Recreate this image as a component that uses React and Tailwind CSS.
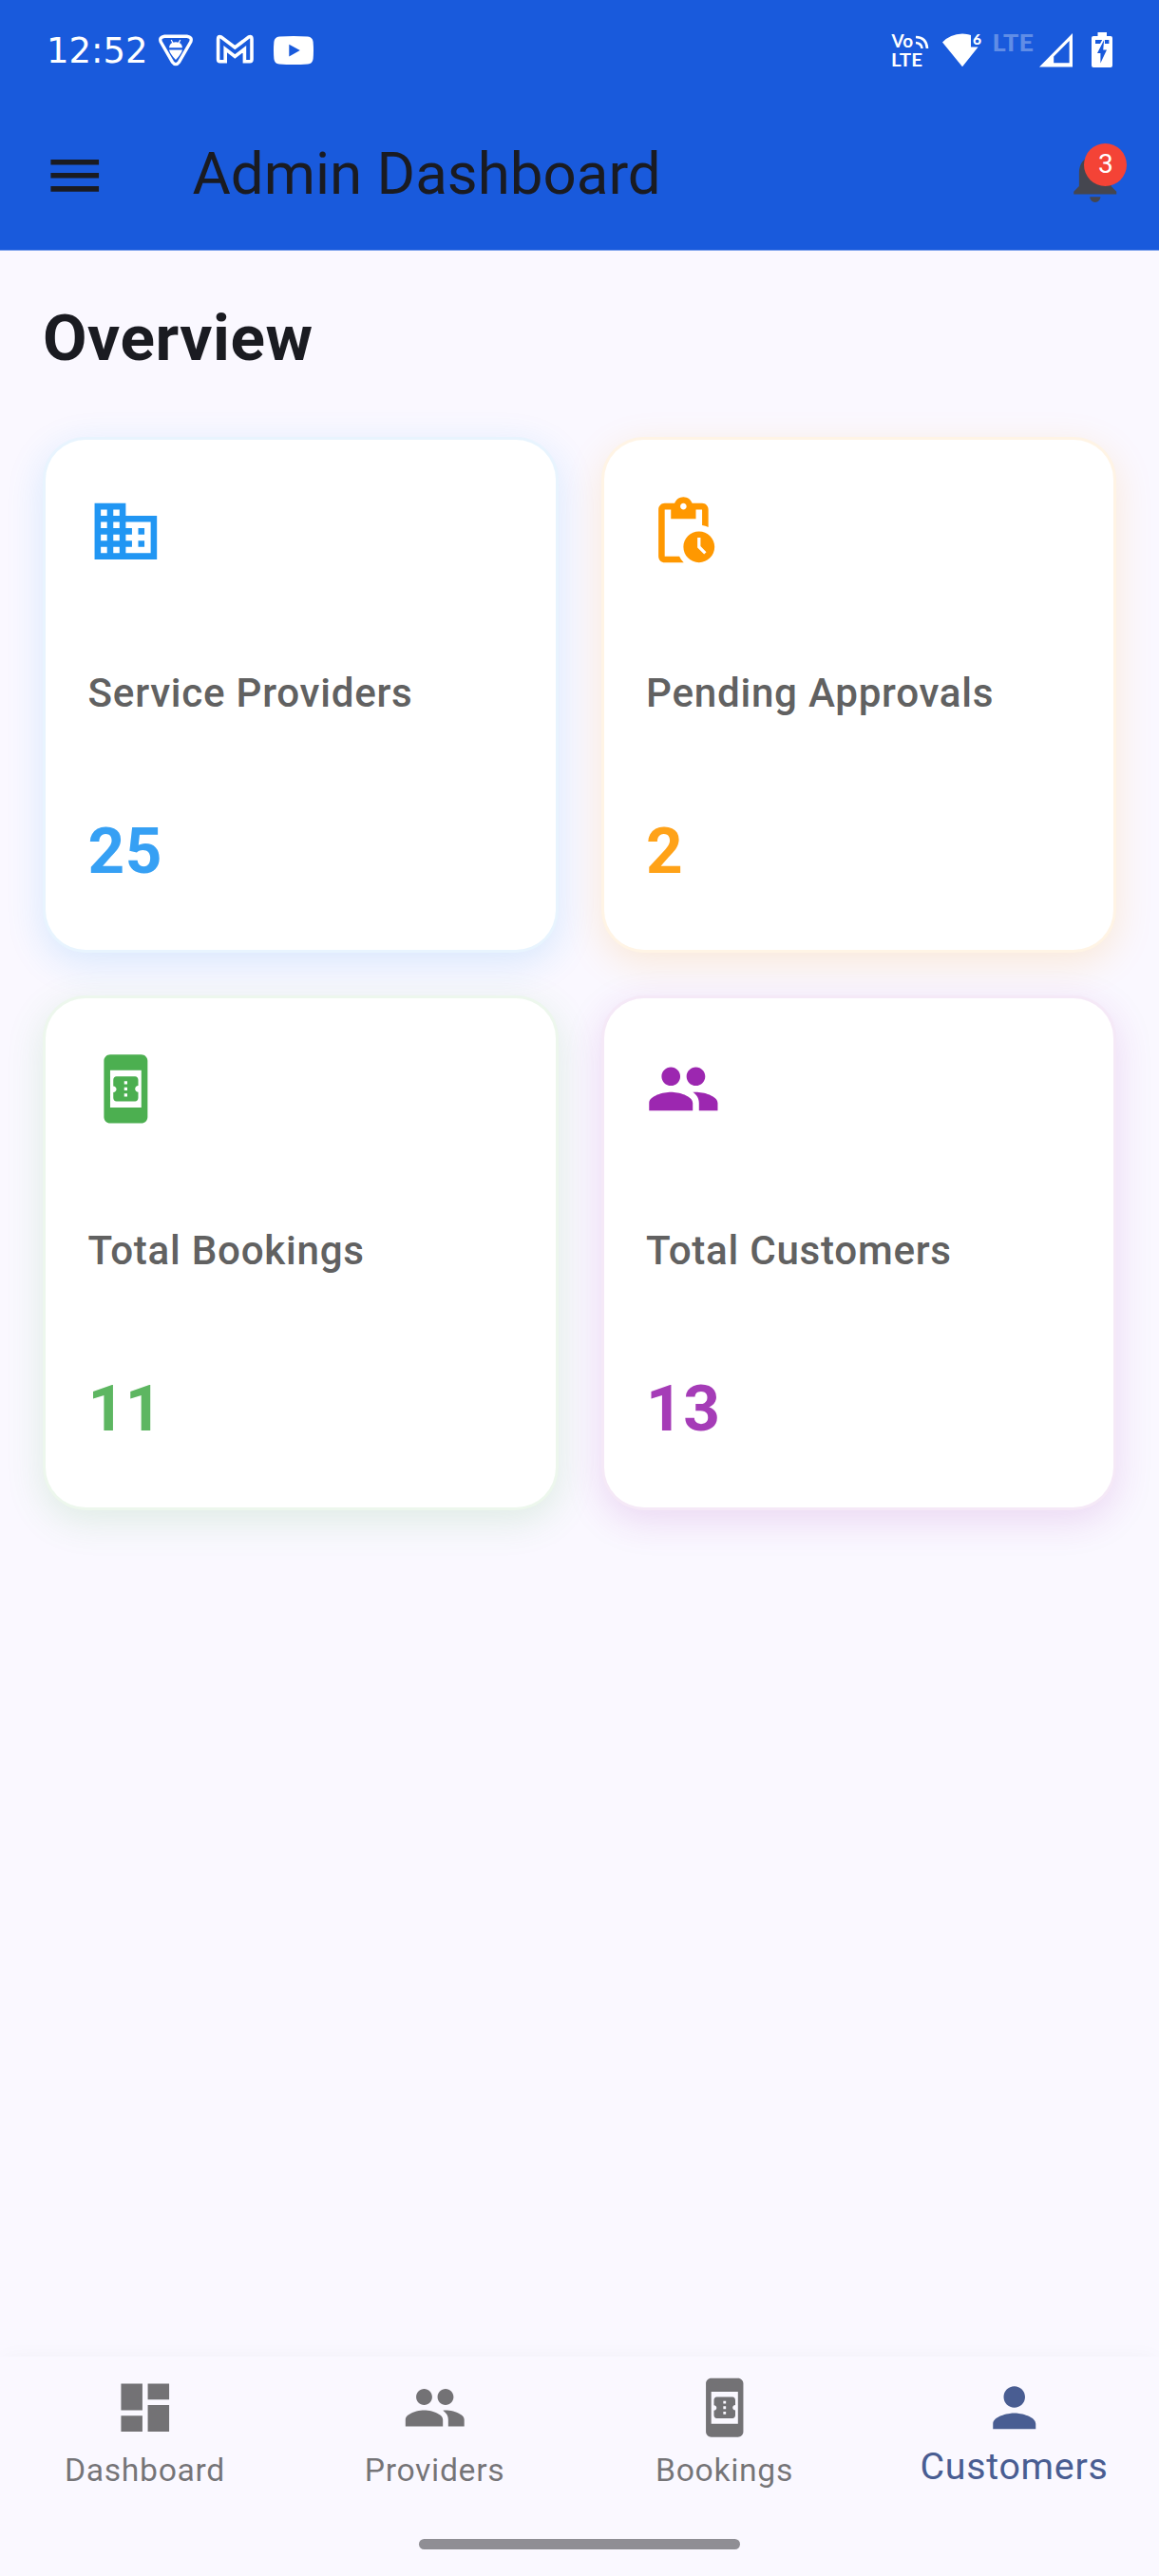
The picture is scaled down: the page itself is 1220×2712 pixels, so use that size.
import React from "react";
import {
  MdBusiness,
  MdPendingActions,
  MdBookOnline,
  MdPeople,
  MdDashboard,
  MdPerson,
  MdNotifications,
  MdMenu,
} from "react-icons/md";

const stats = [
  {
    label: "Service Providers",
    value: "25",
    Icon: MdBusiness,
    color: "text-[#2196f3]",
    card: "border-[#2196f3]/10 shadow-[0_11px_38px_1px_rgba(33,150,243,0.15)]",
  },
  {
    label: "Pending Approvals",
    value: "2",
    Icon: MdPendingActions,
    color: "text-[#ff9800]",
    card: "border-[#ff9800]/10 shadow-[0_11px_38px_1px_rgba(255,152,0,0.15)]",
  },
  {
    label: "Total Bookings",
    value: "11",
    Icon: MdBookOnline,
    color: "text-[#4caf50]",
    card: "border-[#4caf50]/10 shadow-[0_11px_38px_1px_rgba(76,175,80,0.15)]",
  },
  {
    label: "Total Customers",
    value: "13",
    Icon: MdPeople,
    color: "text-[#9c27b0]",
    card: "border-[#9c27b0]/10 shadow-[0_11px_38px_1px_rgba(156,39,176,0.15)]",
  },
];

const tabs = [
  { label: "Dashboard", Icon: MdDashboard },
  { label: "Providers", Icon: MdPeople },
  { label: "Bookings", Icon: MdBookOnline },
  { label: "Customers", Icon: MdPerson, active: true },
];

function ShieldIcon() {
  return (
    <svg className="h-9 w-9" viewBox="0 0 36 36" fill="none">
      <path
        d="M6.2 3.2H29.8Q35.6 4 33.8 9L21.6 30.2Q18 35 14.4 30.2L2.2 9Q.4 4 6.2 3.2Z"
        stroke="white"
        strokeWidth="3.4"
        strokeLinejoin="round"
      />
      <path d="M11 15.2Q11.4 9.2 18 9.2T25 15.2ZM11 17.4H25Q24 21.5 18 28Q12 21.5 11 17.4Z" fill="white" />
      <path d="M13.2 7L15 10.4M22.8 7L21 10.4" stroke="white" strokeWidth="1.2" />
    </svg>
  );
}

function MailIcon() {
  return (
    <svg className="h-8 w-10" viewBox="0 0 40 32" fill="none">
      <path
        d="M2.6 5Q2.6 1.6 5.6 2.8L20.3 14L35 2.8Q38 1.6 38 5V26.6Q38 28.8 36 28.8H30.4V15.6L20.3 23.4L10.2 15.6V28.8H4.6Q2.6 28.8 2.6 26.6Z"
        stroke="white"
        strokeWidth="3.6"
        strokeLinejoin="miter"
      />
    </svg>
  );
}

function VideoIcon() {
  return (
    <svg className="h-[30px] w-[42px]" viewBox="0 0 42 30">
      <path
        fill="white"
        fillRule="evenodd"
        d="M6 .5Q21-.5 36 .5Q41 1 41.6 6Q42.4 15 41.6 24Q41 29 36 29.5Q21 30.5 6 29.5Q1 29 .4 24Q-.4 15 .4 6Q1 1 6 .5ZM16.3 8.8V21.4L27.8 15.1Z"
      />
    </svg>
  );
}

function VolteIcon() {
  return (
    <svg className="-mt-[6px] h-[50px] w-[40px] overflow-visible" viewBox="0 -6 40 50" fill="white">
      <g className="font-[Lato,sans-serif] font-bold">
        <text x="-0.4" y="16" fontSize="18.5" textLength="22.5" lengthAdjust="spacingAndGlyphs">Vo</text>
        <text x="-1" y="35.5" fontSize="19.5" textLength="33" lengthAdjust="spacingAndGlyphs">LTE</text>
      </g>
      <path d="M25 5Q36.5 5.5 37 17M25 11Q31 11.5 31.5 17" fill="none" stroke="white" strokeWidth="2.6" />
    </svg>
  );
}

function WifiIcon() {
  return (
    <svg className="h-9 w-[42px] overflow-visible" viewBox="0 0 42 36" fill="white">
      <path d="M0 9.6Q8 .8 21 .5Q26 .5 30 2V14.6H37.6L21 35.3Z" />
      <text x="32" y="12" fontSize="15.5" className="font-[Lato,sans-serif] font-black">6</text>
    </svg>
  );
}

function NetworkLabel() {
  return (
    <svg className="-mt-[6px] ml-[12px] h-[36px] w-[43px] overflow-visible" viewBox="0 -6 43 36" fill="white" fillOpacity="0.32">
      <text
        x="-1.6"
        y="19.8"
        fontSize="25"
        textLength="43.5"
        lengthAdjust="spacingAndGlyphs"
        className="font-[Lato,sans-serif] font-black"
      >
        LTE
      </text>
    </svg>
  );
}

function SignalIcon() {
  return (
    <svg className="h-9 w-9" viewBox="0 0 36 36" fill="white">
      <path fillRule="evenodd" d="M35 0V35.6H0ZM31.6 8L15.2 24.4V31.2H31.6Z" />
    </svg>
  );
}

function BatteryIcon() {
  return (
    <svg className="h-[37px] w-[22px]" viewBox="0 0 22 37" fill="white">
      <path
        fillRule="evenodd"
        d="M6.5 0H16V4H20Q22 4 22 6V35Q22 37 20 37H2Q0 37 0 35V6Q0 4 2 4H6.5ZM4 8V12H9L11.2 8ZM14 8V12H18.4V8ZM13.2 8L6 22H9.4V32.6L16 18.6H12.2Z"
      />
    </svg>
  );
}

function StatusBar() {
  return (
    <div className="flex h-[106px] items-start justify-between px-[49px] pt-[34px]">
      <div className="flex items-start">
        <div className="w-[118px] pt-[1px] font-['DejaVu_Sans',sans-serif] text-[37px] leading-[38px] text-white">
          12:52
        </div>
        <div className="pt-[1px]"><ShieldIcon /></div>
        <div className="ml-[24px] pt-[2px]"><MailIcon /></div>
        <div className="ml-[21px] pt-[4px]"><VideoIcon /></div>
      </div>
      <div className="flex items-start">
        <VolteIcon />
        <div className="ml-[13px] pt-[1px]"><WifiIcon /></div>
        <NetworkLabel />
        <div className="ml-[5px] pt-[1px]"><SignalIcon /></div>
        <div className="ml-[19px]"><BatteryIcon /></div>
      </div>
    </div>
  );
}

function AppBar() {
  return (
    <div className="flex h-[157px] items-center pl-[45px] pr-[33.7px]">
      <MdMenu className="size-[67.5px] text-[#1a1b21]" />
      <h1 className="mb-[3px] ml-[90px] flex-1 text-[61.875px] leading-[80px] text-[#1a1b21]">Admin Dashboard</h1>
      <div className="relative">
        <MdNotifications className="size-[67.5px] text-[#45464f]" />
        <span className="absolute right-0 top-0 flex size-[45px] items-center justify-center rounded-full bg-[#f44336] text-[28.125px] leading-none text-white">
          3
        </span>
      </div>
    </div>
  );
}

function StatCard({ label, value, Icon, color, card }) {
  return (
    <div className={`h-[542.5px] rounded-[45px] border-[3px] bg-white px-[44.6px] pt-[56.2px] ${card}`}>
      <Icon className={`size-[78.75px] ${color}`} />
      <div className="mt-[103.5px] text-[42.1875px] font-medium leading-[56px] tracking-[0.72px] text-[#616161]">
        {label}
      </div>
      <div className={`mt-[98px] text-[67.5px] font-bold leading-[80px] tracking-[0.5px] opacity-90 ${color}`}>
        {value}
      </div>
    </div>
  );
}

function Tab({ label, Icon, active }) {
  return (
    <div className={`flex flex-col items-center ${active ? "text-[#495d92]" : "text-black/54"}`}>
      <Icon className="size-[67.5px]" />
      <span
        className={
          active
            ? "mt-[5px] text-[39.375px] leading-[48px] tracking-[0.7px]"
            : "mt-[9px] text-[33.75px] leading-[48px] tracking-[0.65px]"
        }
      >
        {label}
      </span>
    </div>
  );
}

export default function App() {
  return (
    <div className="flex h-[2712px] w-[1220px] flex-col overflow-hidden bg-[#faf8ff] font-[Roboto,sans-serif]">
      <header className="h-[264px] border-b border-[#7da1ec] bg-[#195adc]">
        <StatusBar />
        <AppBar />
      </header>
      <main className="flex-1 px-[45px] pt-[52.4px]">
        <h2 className="text-[67.5px] font-bold leading-[80px] tracking-[0.56px] text-[#1a1b21]">Overview</h2>
        <div className="mt-[64px] grid grid-cols-2 gap-[45px]">
          {stats.map((s) => (
            <StatCard key={s.label} {...s} />
          ))}
        </div>
      </main>
      <nav className="flex h-[231px] flex-col items-center bg-[#faf8ff] pt-[19.5px] shadow-[0_0_22px_-4px_rgba(0,0,0,0.05)]">
        <div className="grid w-full grid-cols-4">
          {tabs.map((t) => (
            <Tab key={t.label} {...t} />
          ))}
        </div>
        <div className="mt-[47.5px] h-[11.5px] w-[338px] rounded-full bg-[#8f8e94]" />
      </nav>
    </div>
  );
}
